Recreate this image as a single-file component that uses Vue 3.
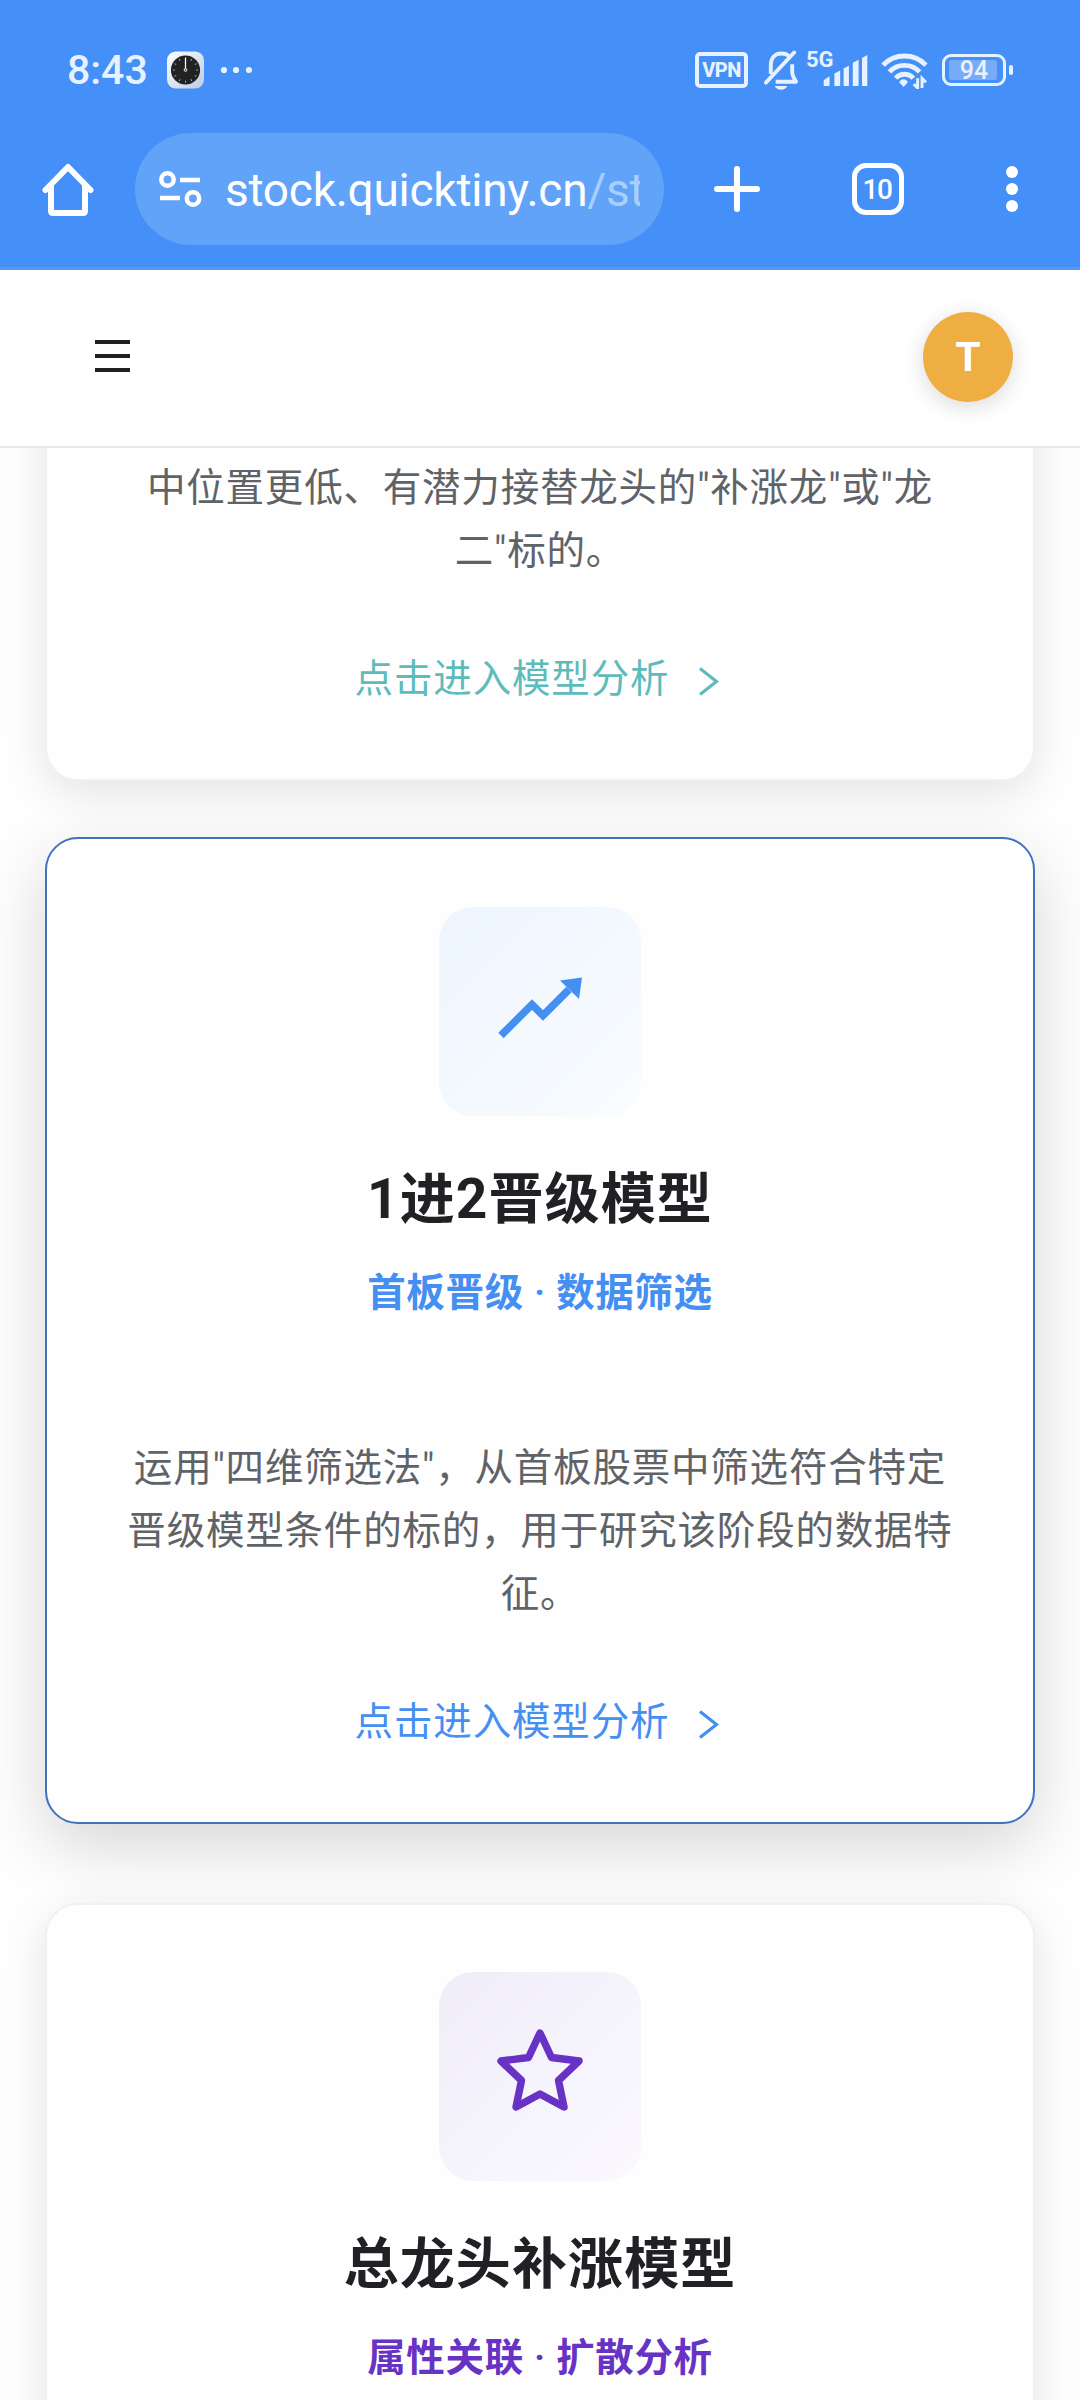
<template>
  <div class="phone">
    <!-- System status bar -->
    <div class="browser">
      <div class="status-bar">
        <div class="status-left">
          <span class="clock">8:43</span>
          <svg class="app-icon" viewBox="0 0 38 38">
            <defs>
              <linearGradient id="app-bg" x1="0" y1="0" x2="1" y2="1">
                <stop offset="0" stop-color="#fff" />
                <stop offset="1" stop-color="#bccbe4" />
              </linearGradient>
            </defs>
            <rect width="38" height="38" rx="9" fill="url(#app-bg)" />
            <circle cx="19" cy="19" r="15" fill="#222" />
            <line
              v-for="n in 12"
              :key="n"
              x1="19" y1="6" x2="19" y2="8"
              stroke="#aaa"
              :transform="`rotate(${n * 30} 19 19)`"
            />
            <path d="M19 18V6.5" stroke="#fff" stroke-width="1.3" />
            <circle cx="19" cy="19" r="1.4" fill="#222" stroke="#fff" />
          </svg>
          <svg class="more" viewBox="0 0 32 8">
            <circle cx="4" cy="4" r="3.1" /><circle cx="16" cy="4" r="3.1" /><circle cx="29" cy="4" r="3.1" />
          </svg>
        </div>
        <div class="status-right">
          <span class="vpn">VPN</span>
          <svg class="bell" viewBox="0 0 38 40" fill="none" stroke="#e6f2ff" stroke-width="4">
            <path d="M8 24V15C8 7 13 3 19 3c3 0 6 1 8 3M30 14v8c0 4 2 7 4 10H13" stroke-linejoin="round" />
            <path d="M3 33L32 2" stroke-linecap="round" />
            <path d="M12 36.500h13c-2 5-11 5-13 0z" fill="#e6f2ff" stroke="none" />
          </svg>
          <span class="net">5G</span>
          <svg class="signal" viewBox="0 0 46 32">
            <path d="M0 26l6-4v10H0zM11 19l6-3v16h-6zM20.500 14l5.500-3v21h-5.500zM30 8l6-3v27h-6zM39.500 3l5.500-3v32h-5.500z" />
          </svg>
          <svg class="wifi" viewBox="0 0 48 38" fill="none" stroke="#e6f2ff" stroke-width="5">
            <path d="M2 13.500C14 1 34 1 46 13.500M8.500 20.500c8-9 23-9 31 0M15 27c4.500-5.500 13.500-5.500 18 0" />
            <path d="M18.500 31c2-4 7-4 9 0l-4.500 5z" fill="#e6f2ff" stroke="none" />
            <path d="M37.500 27v10l-4-4M42 37V27l4 4" stroke-width="3" />
          </svg>
          <div class="battery">
            <div class="battery-body"><span class="battery-fill">94</span></div>
            <i class="battery-nub"></i>
          </div>
        </div>
      </div>

      <!-- Browser toolbar -->
      <div class="toolbar">
        <svg class="home" viewBox="0 0 52 54" fill="none" stroke="#fff" stroke-width="6" stroke-linejoin="round">
          <path d="M3.500 28L26 5l22.500 23" stroke-linecap="round" />
          <path d="M9 24v25q0 2 2 2h30q2 0 2-2V24" />
        </svg>
        <div class="address">
          <svg class="tune" viewBox="0 0 43 36" fill="none" stroke="#fff" stroke-width="4.500">
            <circle cx="8.500" cy="8.500" r="6.200" />
            <path d="M21 9h20M1 27h20" />
            <circle cx="34" cy="27.500" r="6.200" />
          </svg>
          <div class="url">stock.quicktiny.cn<span class="url-path">/str</span></div>
        </div>
        <svg class="plus" viewBox="0 0 46 46" stroke="#fff" stroke-width="6" stroke-linecap="round">
          <path d="M23 3v40M3 23h40" />
        </svg>
        <div class="tabs">10</div>
        <svg class="kebab" viewBox="0 0 12 48" fill="#fff">
          <circle cx="6" cy="7" r="6" /><circle cx="6" cy="24" r="6" /><circle cx="6" cy="41" r="6" />
        </svg>
      </div>
    </div>

    <!-- Site header -->
    <header class="site-header">
      <button class="menu-btn"><i></i><i></i><i></i></button>
      <div class="avatar">T</div>
    </header>

    <main class="models">
      <section
        v-for="m in models"
        :key="m.id"
        class="model-card"
        :class="`model--${m.id}`"
      >
        <template v-if="m.title">
          <div class="model-icon">
            <svg v-if="m.id === 'promote'" viewBox="0 0 202 209">
              <path d="M62 128.500L93 97.500L104 108.500L130 82.500" fill="none" stroke="currentColor" stroke-width="7.600" />
              <path d="M121 73.500L143 70.500L140 92z" fill="currentColor" />
            </svg>
            <svg v-else viewBox="0 0 202 209">
              <path
                d="M101 61l11.500 24.500L140 89l-20.500 19.500L125 135 101 122 77 135l5.500-26.500L62 89l27.500-3.500z"
                fill="none" stroke="currentColor" stroke-width="7.400" stroke-linejoin="round"
              />
            </svg>
          </div>
          <h2 class="model-title">{{ m.title }}</h2>
          <div class="model-sub">{{ m.sub }}</div>
        </template>
        <p v-if="m.desc.length" class="model-desc">
          <span v-for="line in m.desc" :key="line">{{ line }}</span>
        </p>
        <a v-if="m.desc.length" class="model-link">
          点击进入模型分析
          <svg class="arrow" viewBox="0 0 20 29" fill="none" stroke="currentColor" stroke-width="3.200">
            <path d="M1 1.500L17.500 14.500L1 27.500" />
          </svg>
        </a>
      </section>
    </main>
  </div>
</template>

<script setup>
const models = [
  {
    id: 'second',
    desc: ['中位置更低、有潜力接替龙头的"补涨龙"或"龙', '二"标的。'],
  },
  {
    id: 'promote',
    title: '1进2晋级模型',
    sub: '首板晋级 · 数据筛选',
    desc: [
      '运用"四维筛选法"，从首板股票中筛选符合特定',
      '晋级模型条件的标的，用于研究该阶段的数据特',
      '征。',
    ],
  },
  {
    id: 'spread',
    title: '总龙头补涨模型',
    sub: '属性关联 · 扩散分析',
    desc: [],
  },
];
</script>

<style>
body { background: #fefefe; }
</style>

<style scoped>
.phone {
  width: 1080px; height: 2400px; overflow: hidden; display: flex; flex-direction: column;
  background: #fefefe; font-family: Roboto, "Noto Sans CJK SC", sans-serif;
}
.phone * { box-sizing: border-box; }
svg { display: block; flex: none; }

/* Browser chrome */
.browser { height: 270px; flex: none; background: #448ff8; border-bottom: 3px solid #5599f4; color: #fff; }
.status-bar { height: 133px; padding: 7px 67px 0 67px; display: flex; justify-content: space-between; align-items: center; }
.status-left, .status-right { display: flex; align-items: center; color: #e6f2ff; }
.clock { width: 100px; font-size: 41px; font-weight: 500; line-height: 48px; }
.app-icon { width: 37px; height: 38px; }
.more { width: 32px; height: 8px; margin-left: 16px; fill: #e6f2ff; }

.vpn { width: 53px; height: 36px; border: 4px solid #e6f2ff; border-radius: 5px; font-size: 20px; font-weight: 800; line-height: 28px; text-align: center; letter-spacing: -.5px; }
.bell { width: 37px; height: 40px; margin-left: 15px; }
.net { width: 29px; margin: -21px 0 0 6px; font-size: 22px; font-weight: 700; line-height: 22px; }
.signal { width: 46px; height: 31px; margin-left: -12px; fill: #e6f2ff; }
.wifi { width: 47px; height: 37px; margin-left: 12px; }
.battery { display: flex; align-items: center; gap: 3px; margin-left: 14px; }
.battery-body { width: 64px; height: 32px; border: 3px solid #e6f2ff; border-radius: 9px; padding: 3px 6px 3px 4px; }
.battery-fill { display: block; height: 20px; background: #77abf8; border-radius: 2px; font-size: 25px; font-weight: 500; line-height: 22px; text-align: center; padding-left: 2px; }
.battery-nub { width: 4px; height: 10px; border-radius: 2px; background: #e6f2ff; }

.toolbar { height: 112px; display: flex; align-items: center; padding-left: 42px; }
.home { width: 52px; height: 54px; }
.address { width: 529px; height: 112px; margin-left: 41px; padding: 0 24px; border-radius: 56px; background: #61a3f8; display: flex; align-items: center; }
.tune { width: 43px; height: 36px; }
.url { width: 415px; margin: 2px 0 0 23px; overflow: hidden; white-space: nowrap; font-size: 46px; letter-spacing: -.25px; line-height: 64px; }
.url-path { color: #a9d0fd; }
.plus { width: 46px; height: 46px; margin-left: 50px; }
.tabs { width: 52px; height: 52px; margin-left: 92px; border: 5.500px solid #fff; border-radius: 14px; font-size: 28px; font-weight: 500; line-height: 43px; text-align: center; letter-spacing: -1.500px; padding-right: 2px; }
.kebab { width: 12px; height: 48px; margin-left: 102px; }

/* Site header */
.site-header { height: 178px; flex: none; padding: 0 67px 2px 95px; border-bottom: 2px solid #e8e8ec; background: #fff; display: flex; justify-content: space-between; align-items: center; position: relative; z-index: 2; }
.menu-btn { width: 35px; padding: 0; border: none; background: none; display: flex; flex-direction: column; gap: 10.500px; margin-top: -2px; }
.menu-btn i { height: 3.500px; background: #202124; }
.avatar { width: 90px; height: 90px; border-radius: 50%; background: #eeae42; color: #fff; font-size: 41px; font-weight: 700; line-height: 90px; text-align: center; box-shadow: 0 5px 22px rgba(0,0,0,.15); }

/* Model cards */
.models { padding: 0 45px; }
.model-card {
  border: 2px solid #f1f1f1; border-radius: 33px; background: #fefefe; padding: 67px 0 0;
  display: flex; flex-direction: column; align-items: center;
  box-shadow: 0 11px 44px rgba(0,0,0,.11);
}
.model--second  { height: 393px; margin-top: -60px; padding-top: 66px; color: #5dbcbb; }
.model--promote { height: 987px; margin-top: 56px; padding-top: 68px; color: #458ef2; border-color: #3f73c0; box-shadow: 0 22px 66px rgba(0,0,0,.16); }
.model--spread  { height: 988px; margin-top: 79px; color: #6832c4; }

.model-icon { width: 202px; height: 209px; flex: none; border-radius: 34px; background: linear-gradient(135deg, #edf5fe, #f9fcff); }
.model--spread .model-icon { background: linear-gradient(135deg, #f0edfa, #fbf9fe); }
.model-title { margin: 46px 0 0; font-size: 55px; font-weight: 700; line-height: 74px; letter-spacing: 1.100px; color: #202124; }
.model-sub { margin-top: 28px; font-size: 38.500px; font-weight: 600; line-height: 58px; letter-spacing: .65px; }
.model-desc { margin: 0; font-size: 38.500px; line-height: 63px; letter-spacing: .8px; color: #5f6368; }
.model-desc span { display: block; text-align: center; white-space: nowrap; }
.model-sub + .model-desc { margin-top: 114px; }
.model-link { margin: 67px 6px 0 0; display: flex; align-items: center; font-size: 38.500px; line-height: 60px; letter-spacing: .85px; }
.arrow { width: 20px; height: 29px; margin: 4px 0 0 30px; }
</style>
